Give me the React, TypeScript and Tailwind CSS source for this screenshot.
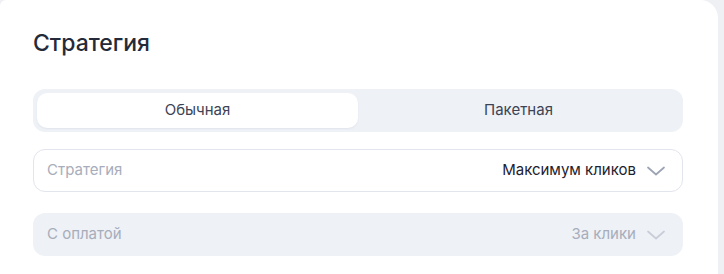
const FONT = { fontFamily: "Inter, 'Noto Sans', sans-serif" };

function Chevron({ className }: { className: string }) {
  return (
    <svg viewBox="0 0 18 10" className={className} fill="none" stroke="currentColor" strokeWidth={1.7} strokeLinecap="round" strokeLinejoin="round">
      <path d="M1 1.5 9 8.5 17 1.5" />
    </svg>
  );
}

function Select({ label, value, disabled }: { label: string; value: string; disabled?: boolean }) {
  return (
    <div
      className={
        disabled
          ? "flex h-[43px] items-center rounded-[12px] bg-[#eef1f6] pl-[14px] pr-[18px]"
          : "flex h-[43px] items-center rounded-[12px] border border-[#e3e5ee] bg-white pl-[13px] pr-[17px]"
      }
    >
      <span className="flex-1 text-[15px] text-[#a7adbb]">{label}</span>
      <span className={disabled ? "text-[15px] text-[#a7adbb]" : "text-[15px] text-[#1d2230]"}>{value}</span>
      <Chevron
        className={disabled ? "ml-[11px] h-[10px] w-[18px] text-[#c8cdd8]" : "ml-[11px] h-[10px] w-[18px] text-[#9ca3b3]"}
      />
    </div>
  );
}

export default function App() {
  return (
    <div className="flex h-[274px] w-[724px] bg-[#eef0f4]" style={FONT}>
      <section className="h-full w-[718px] rounded-tr-[18px] rounded-tl-[6px] bg-white pl-[33px] pr-[35px] pt-[28px]">
        <h2 className="text-[23px] font-medium leading-[30px] text-[#242a3a]">Стратегия</h2>

        <div className="mt-[31px] flex h-[43px] rounded-[12px] bg-[#eef1f6] p-[4px]">
          <button className="flex-1 rounded-[10px] bg-white text-[15px] text-[#3c4354] shadow-[0_1px_2px_rgba(30,40,70,0.06)]">
            Обычная
          </button>
          <button className="flex-1 text-[15px] text-[#3c4354]">Пакетная</button>
        </div>

        <div className="mt-[17px] flex flex-col gap-[21px]">
          <Select label="Стратегия" value="Максимум кликов" />
          <Select label="С оплатой" value="За клики" disabled />
        </div>
      </section>
    </div>
  );
}
